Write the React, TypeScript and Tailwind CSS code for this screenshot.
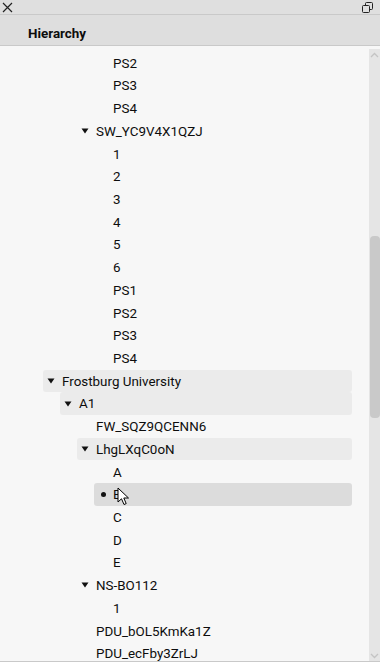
import React from "react";

type Row = { level: number; label: string; marker?: "tri" | "dot"; bg?: "sel" | "hover" };

const rows: Row[] = [
  { level: 3, label: "PS2" },
  { level: 3, label: "PS3" },
  { level: 3, label: "PS4" },
  { level: 2, label: "SW_YC9V4X1QZJ", marker: "tri" },
  { level: 3, label: "1" },
  { level: 3, label: "2" },
  { level: 3, label: "3" },
  { level: 3, label: "4" },
  { level: 3, label: "5" },
  { level: 3, label: "6" },
  { level: 3, label: "PS1" },
  { level: 3, label: "PS2" },
  { level: 3, label: "PS3" },
  { level: 3, label: "PS4" },
  { level: 0, label: "Frostburg University", marker: "tri", bg: "sel" },
  { level: 1, label: "A1", marker: "tri", bg: "sel" },
  { level: 2, label: "FW_SQZ9QCENN6" },
  { level: 2, label: "LhgLXqC0oN", marker: "tri", bg: "sel" },
  { level: 3, label: "A" },
  { level: 3, label: "B", marker: "dot", bg: "hover" },
  { level: 3, label: "C" },
  { level: 3, label: "D" },
  { level: 3, label: "E" },
  { level: 2, label: "NS-BO112", marker: "tri" },
  { level: 3, label: "1" },
  { level: 2, label: "PDU_bOL5KmKa1Z" },
  { level: 2, label: "PDU_ecFby3ZrLJ" },
];

const indent = ["ml-[43px]", "ml-[60px]", "ml-[77px]", "ml-[94px]"];

function TreeRow({ r }: { r: Row }) {
  const bg = r.bg === "sel" ? "bg-[#ebebeb]" : r.bg === "hover" ? "bg-[#dcdcdc]" : "";
  return (
    <div className={`relative flex h-[22.73px] shrink-0 items-center rounded-[3px] ${indent[r.level]} ${bg}`}>
      <div className="relative flex h-full w-[19px] shrink-0 items-center">
        {r.marker === "tri" && (
          <svg width="8" height="6" viewBox="0 0 8 6" className="ml-[4px]">
            <path d="M0.5 0.5 L7.5 0.5 L4 5.5 Z" fill="#111" />
          </svg>
        )}
        {r.marker === "dot" && <div className="ml-[7px] h-[5px] w-[5px] rounded-full bg-[#111]" />}
      </div>
      <span className="whitespace-nowrap pt-[1px] text-[13.4px] leading-none text-[#0d0d0d]">{r.label}</span>
    </div>
  );
}

export default function App() {
  return (
    <div
      className="flex h-[662px] w-[380px] flex-col overflow-hidden bg-[#f7f7f7]"
      style={{ fontFamily: "Roboto, 'Noto Sans', sans-serif" }}
    >
      {/* top bar */}
      <div className="flex h-[15px] shrink-0 items-center justify-between border-b border-[#c9c9c9] bg-[#dfdfdf] pl-[2px] pr-[7px]">
        <svg width="11" height="11" viewBox="0 0 11 11">
          <path d="M1 1 L10 10 M10 1 L1 10" stroke="#222" strokeWidth="1.2" fill="none" />
        </svg>
        <svg width="11" height="11" viewBox="0 0 11 11">
          <rect x="3.5" y="0.5" width="7" height="7" rx="1" fill="none" stroke="#222" strokeWidth="1" />
          <rect x="0.5" y="3.5" width="7" height="7" rx="1" fill="#dfdfdf" stroke="#222" strokeWidth="1" />
        </svg>
      </div>
      {/* header */}
      <div className="flex h-[31px] shrink-0 items-center border-b border-[#c9c9c9] bg-[#dedede] pl-[28px] pt-[9px]">
        <span className="text-[13.4px] font-bold text-[#0d0d0d]">Hierarchy</span>
      </div>
      {/* body */}
      <div className="flex min-h-0 flex-1 border-b border-[#c9c9c9]">
        <div className="relative flex min-w-0 flex-1 flex-col overflow-hidden pr-[17px] pt-[5.5px]">
          {rows.map((r, i) => (
            <TreeRow key={i} r={r} />
          ))}
          {/* mouse cursor */}
          <svg
            className="pointer-events-none absolute left-[117px] top-[441px]"
            width="13"
            height="20"
            viewBox="0 0 13 20"
          >
            <path
              d="M1 1 L1 15 L4.5 11.8 L7 17.5 L9.2 16.6 L6.8 11 L11.5 11 Z"
              fill="#fff"
              stroke="#000"
              strokeWidth="1"
              strokeLinejoin="round"
            />
          </svg>
        </div>
        {/* scrollbar */}
        <div className="mt-[3px] flex w-[11px] shrink-0 flex-col bg-[#e5e5e5]">
          <div className="flex h-[11px] shrink-0 items-center justify-center">
            <svg width="9" height="6" viewBox="0 0 9 6">
              <path d="M1 5 L4.5 1.5 L8 5" stroke="#c4c4c4" strokeWidth="1.3" fill="none" />
            </svg>
          </div>
          <div className="h-[176px] shrink-0" />
          <div className="mx-[0.5px] h-[182px] shrink-0 rounded-[4px] bg-[#c9c9c9]" />
          <div className="flex-1" />
          <div className="flex h-[11px] shrink-0 items-center justify-center">
            <svg width="9" height="6" viewBox="0 0 9 6">
              <path d="M1 1 L4.5 4.5 L8 1" stroke="#c4c4c4" strokeWidth="1.3" fill="none" />
            </svg>
          </div>
        </div>
      </div>
    </div>
  );
}
